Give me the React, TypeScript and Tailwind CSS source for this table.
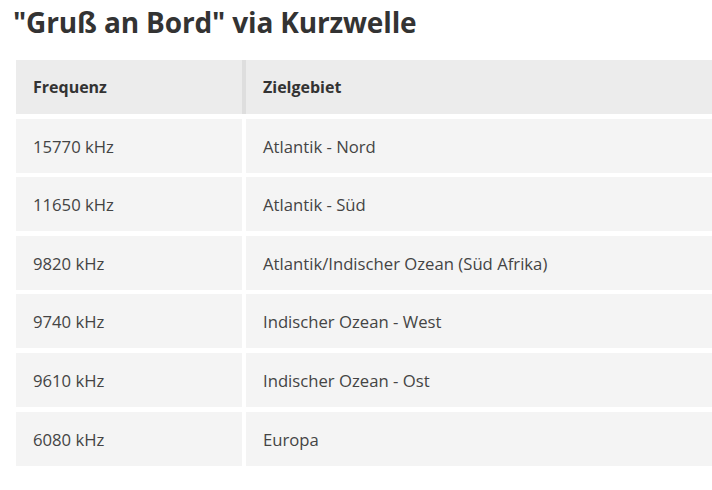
const rows = [
  { freq: '15770 kHz', area: 'Atlantik - Nord' },
  { freq: '11650 kHz', area: 'Atlantik - Süd' },
  { freq: '9820 kHz', area: 'Atlantik/Indischer Ozean (Süd Afrika)' },
  { freq: '9740 kHz', area: 'Indischer Ozean - West' },
  { freq: '9610 kHz', area: 'Indischer Ozean - Ost' },
  { freq: '6080 kHz', area: 'Europa' },
];

export default function App() {
  return (
    <div className="h-[490px] w-[712px] overflow-hidden bg-white font-['Open_Sans',sans-serif] text-[#444]">
      <h2 className="pl-[13px] pt-[4px] text-[28px] font-bold leading-[36px] tracking-[-0.15px] text-[#333]">
        "Gruß an Bord" via Kurzwelle
      </h2>

      <div className="mt-[20px] ml-4 flex flex-col gap-y-[4.6px]">
        {/* Header */}
        <div className="grid h-[54px] grid-cols-[226px_1fr] gap-x-1 bg-[#dedede]">
          <div className="flex items-center bg-[#ececec] pl-[17px] text-[16px] font-bold text-[#333]">
            Frequenz
          </div>
          <div className="flex items-center bg-[#ececec] pl-[17px] text-[16px] font-bold text-[#333]">
            Zielgebiet
          </div>
        </div>

        {rows.map((row) => (
          <div key={row.freq} className="grid h-[54px] grid-cols-[226px_1fr] gap-x-1">
            <div className="flex items-center bg-[#f4f4f4] pl-[17px] pt-px text-[16.7px]">{row.freq}</div>
            <div className="flex items-center bg-[#f4f4f4] pl-[17px] pt-px text-[16.7px]">{row.area}</div>
          </div>
        ))}
      </div>
    </div>
  );
}
